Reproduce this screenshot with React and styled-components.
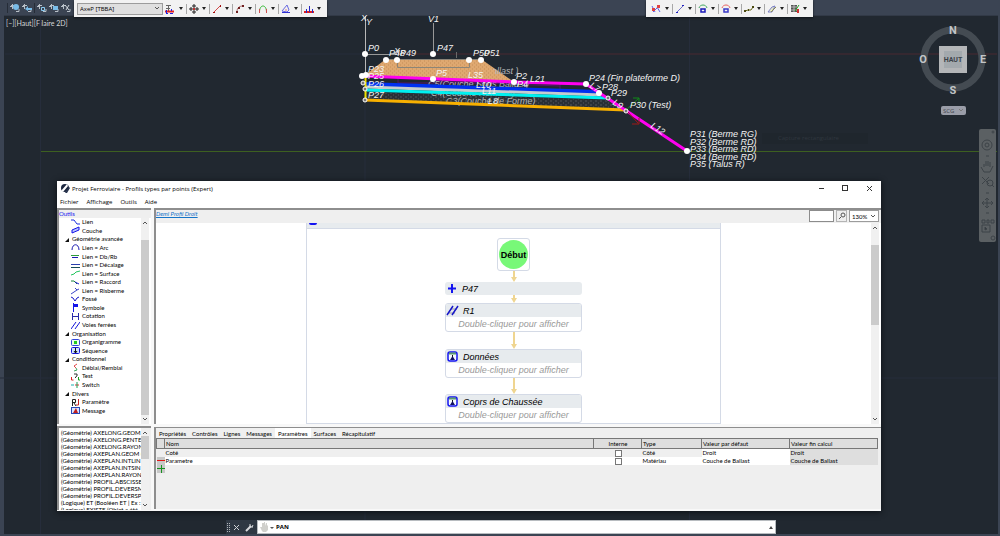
import React from "react";
import styled, { createGlobalStyle } from "styled-components";

const GlobalStyle = createGlobalStyle`
  * { box-sizing: border-box; }
  body {
    margin: 0;
    background: #212830;
    font-family: "Open Sans", "Noto Sans", sans-serif;
    font-size: 6px;
    color: #000;
  }
  button, input, select { font: inherit; color: inherit; margin: 0; padding: 0; border: 0; background: none; }
  svg { display: block; flex: none; }
  ul { list-style: none; margin: 0; padding: 0; }
`;

// ---------- icons of the tree ----------
const treeIcons = {
  lien: <path d="M0 2h3l3 4h3" stroke="#1c2fe0" />,
  couche: <path d="M1 4l7-3v3l-7 3z" stroke="#1414e8" fill="#b9c4ff" />,
  arc: <path d="M1 7c0-7 7-7 7 0" stroke="#1b1bb0" />,
  dbrb: <><path d="M0 3.500h8" stroke="#2d9b3c" /><path d="M1 5.500h6" stroke="#1b1bb0" /></>,
  decalage: <><path d="M0 3.500h9" stroke="#2a3fae" /><path d="M0 6.500h9" stroke="#164a55" /></>,
  surface: <path d="M0 6l3-1 2-2 4-1" stroke="#22c55e" />,
  raccord: <><path d="M0 3h3l3 3" stroke="#16803a" /><path d="M4 4l4 2" stroke="#1b1bd0" /></>,
  risberme: <path d="M0 8l3-2 3-2-2-2M6 4l2-1" stroke="#3a45c8" />,
  fosse: <path d="M0 2l2 1 2 3 2-3 2-1" stroke="#1414c8" />,
  symbole: <><path d="M2.500 0v9" stroke="#1414e8" /><path d="M3 1h4v3H3z" fill="#1414e8" /></>,
  cotation: <path d="M1.500 1v7M7.500 1v7M1 4.500h7" stroke="#2b2ba8" />,
  voies: <path d="M0 8l5-7M4 8l5-7" stroke="#1414d8" />,
  organigramme: <><rect x="0.500" y="1.500" width="8" height="6" rx="1" stroke="#3045d8" fill="#eaffea" /><path d="M3 3h3v3H3z" fill="#22c822" /></>,
  sequence: <><rect x="0.500" y="1.500" width="8" height="6" rx="1" stroke="#1414d8" fill="#cfe0ff" /><path d="M4.500 2v5M3 5l1.500 2 1.500-2" stroke="#111" /></>,
  deblai: <><path d="M6 1L3 3l2 2" stroke="#e04848" /><path d="M5 5l1 2-3 1" stroke="#40a860" /></>,
  test: <><path d="M3 2h3v2L4.500 5v1" stroke="#333" /><path d="M0.500 5v3h2" stroke="#d82020" /><path d="M7.500 5v3H9" stroke="#18a018" /></>,
  swtch: <><path d="M0 5h3" stroke="#18b0b0" /><path d="M4 5h4" stroke="#e03030" /><path d="M6 2v6" stroke="#18a058" /></>,
  parametre: <><path d="M1.500 8V1.500h3v3h-3M3 5l2 3" stroke="#222" /><path d="M7.500 1v6H5" stroke="#c82020" /></>,
  message: <><rect x="0.500" y="1.500" width="8" height="6" stroke="#2848b8" fill="#dce4ff" /><path d="M2 7l3-5 2 5z" fill="#c02020" /></>,
};

const TREE = [
  ["lien", "Lien"],
  ["couche", "Couche"],
  [null, "Géométrie avancée"],
  ["arc", "Lien = Arc"],
  ["dbrb", "Lien = Db/Rb"],
  ["decalage", "Lien = Décalage"],
  ["surface", "Lien = Surface"],
  ["raccord", "Lien = Raccord"],
  ["risberme", "Lien = Risberme"],
  ["fosse", "Fossé"],
  ["symbole", "Symbole"],
  ["cotation", "Cotation"],
  ["voies", "Voies ferrées"],
  [null, "Organisation"],
  ["organigramme", "Organigramme"],
  ["sequence", "Séquence"],
  [null, "Conditionnel"],
  ["deblai", "Déblai/Remblai"],
  ["test", "Test"],
  ["swtch", "Switch"],
  [null, "Divers"],
  ["parametre", "Paramètre"],
  ["message", "Message"],
];

const FUNCTIONS = [
  "(Géométrie) AXELONG.GEOM (E",
  "(Géométrie) AXELONG.PENTE (",
  "(Géométrie) AXELONG.RAYON",
  "(Géométrie) AXEPLAN.GEOM (E",
  "(Géométrie) AXEPLAN.INTLIN (",
  "(Géométrie) AXEPLAN.INTSIN (",
  "(Géométrie) AXEPLAN.RAYON (",
  "(Géométrie) PROFIL.ABSCISSE",
  "(Géométrie) PROFIL.DEVERSMI",
  "(Géométrie) PROFIL.DEVERSPE",
  "(Logique) ET (Booléen ET | Ex :",
  "(Logique) EXISTE (Objet a été",
];

const TABS = ["Propriétés", "Contrôles", "Lignes", "Messages", "Paramètres", "Surfaces", "Récapitulatif"];

// ---------- toolbar icons, 10x10 ----------
const mainTools = [
  ["Axe", <><path d="M1 1.500h5M3.500 1v6M1 4.500h4" stroke="#666" /><path d="M0 7.500h9" stroke="#e02020" strokeWidth="2" /><path d="M1 9.500h2M5 9.500h3M6.500 5v2M1.500 6v3" stroke="#2020e0" /></>],
  ["Déplacer", <><path d="M5 0v10M0 5h10" stroke="#222" /><path d="M3 2h4M3 8h4M2 3v4M8 3v4" stroke="#222" /><path d="M4 4h2v2H4z" fill="#c03030" /></>],
  ["Ligne", <><path d="M2 8l6-6" stroke="#d04848" /><path d="M1 8h2v1H1zM8 1h1v2H8z" fill="#a01010" /></>],
  ["Arc", <><path d="M2 8c0-4 2-6 6-6" stroke="#a06060" /><path d="M1 7h2v2H1zM3 3h2v2H3zM7 1h2v2H7z" fill="#702020" /></>],
  ["Raccord", <><path d="M1.500 8c0-8 7-8 7 0" stroke="#30b830" /><path d="M1.500 5v4M8.500 5v4" stroke="#d05050" /></>],
  ["Angle", <><path d="M1 7l5-6 2 5-2 2z" stroke="#6868e0" /><path d="M1 8.500h8" stroke="#3030d0" /><path d="M4 6h2" stroke="#e08080" /></>],
  ["Profil", <><path d="M0 8h10" stroke="#e02020" strokeWidth="2" /><path d="M2.500 5v4M5.500 2v6M8.500 5v4" stroke="#2828c0" /></>],
];

const sideTools = [
  ["Croisement", <><path d="M1 2l3 6M2 8l6-6M6 3l3 5" stroke="#6060e8" /><path d="M1 4h3v3H1zM6 1h3v3H6z" fill="#e04040" /></>],
  ["Segment", <><path d="M2 8l6-6" stroke="#7070c8" /><path d="M1 8h2v1H1zM7 1h2v1H7z" fill="#2020c0" /></>],
  ["Boucle verte", <><path d="M1 4c1-4 7-4 8 0" stroke="#40a860" /><rect x="3" y="5" width="4" height="3" stroke="#1818b8" strokeWidth="1.500" /></>],
  ["Boucle rouge", <><path d="M1 4c1-4 7-4 8 0" stroke="#e86060" /><rect x="3" y="5" width="4" height="3" stroke="#3838c8" strokeWidth="1.500" /></>],
  ["Courbe", <><path d="M1 7l3-1 3 0 2-3" stroke="#6a6a20" /><path d="M0 6h2v2H0zM4 5h1v2H4zM8 2h2v2H8z" fill="#4a4a10" /></>],
  ["Bande", <><path d="M1 8l4-5 3-1-3 6z" stroke="#7a80c8" fill="#e8ecc8" /><path d="M4 8l5-5" stroke="#8a8a50" /></>],
  ["Grille", <><path d="M1 1h6v7H1z" fill="#555" /><path d="M1 3h6M1 6h6M4 1v7" stroke="#b8b8b8" /><path d="M5 7l4-6" stroke="#20a020" /><path d="M7 5h2v4H7z" fill="#d03030" /></>],
];

const Caret = () => (
  <svg width="4" height="3" viewBox="0 0 4 3"><path d="M0 0h4L2 3z" fill="#222" /></svg>
);

const Chevron = ({ up, color = "#555" }) => (
  <svg width="6" height="5" viewBox="0 0 6 5" fill="none" stroke={color}>
    <path d={up ? "M1 4l2-2 2 2" : "M1 1l2 2 2-2"} />
  </svg>
);

function Tools({ items }) {
  return items.map(([name, art]) => (
    <Tool key={name} aria-label={name}>
      <svg width="10" height="10" viewBox="0 0 10 10" fill="none">{art}</svg>
      <Caret />
    </Tool>
  ));
}

function ScrollBar({ before, size }) {
  return (
    <Scroll>
      <Chevron up />
      <Track>
        <Thumb $before={before} $size={size} />
      </Track>
      <Chevron />
    </Scroll>
  );
}

// cross-section drawn in model space
function CrossSection() {
  const points = [
    [365, 54], [433, 54], [386, 60], [397, 60], [469, 60], [481, 60], [362, 76], [366, 75],
    [433, 79], [514, 82], [586, 84], [599, 93], [687, 151],
  ];
  const rings = [[363, 83], [365, 89], [365, 100], [608, 98], [626, 111]];
  return (
    <Drawing viewBox="0 0 1000 536" width="1000" height="536" fill="none">
      <defs>
        <pattern id="ballast" width="4" height="4" patternUnits="userSpaceOnUse">
          <rect width="4" height="4" fill="#dfa870" />
          <path d="M0 1h1M2 3h1" stroke="#c68f58" />
        </pattern>
        <pattern id="forme" width="5" height="4" patternUnits="userSpaceOnUse">
          <rect width="5" height="4" fill="#2a3036" />
          <path d="M0 1h2M3 3h1" stroke="#50565c" />
        </pattern>
      </defs>
      <path d="M5 54h360M40.500 16v518M365 100v434M689.500 16v518M0 378h997" stroke="#262d3b" />
      <path d="M41 151.500h956" stroke="#3d6020" />
      <path d="M400 54h597" stroke="#4a2930" />
      <path d="M365.500 16v62" stroke="#b8b8b8" />
      <path d="M433.500 23v31M365 54.500h32" stroke="#989898" />

      <path d="M386 59h95l33 23-149-7z" fill="url(#ballast)" />
      <path d="M386 59.500h95" stroke="#8b8478" />
      <path d="M456.500 52v6" stroke="#6a6a6a" />
      <path d="M365 92l241 8 20 10-261-10z" fill="url(#forme)" />
      <path d="M398 78v5h162v6M433 81l127 5" stroke="#57146a" />

      <DimText x="438" y="74">C6(Couche Ballast )</DimText>
      <path d="M386 61h95l14 10v5l-130-1z" fill="url(#ballast)" />
      <path d="M397.500 60v7.500h72V60" stroke="#8d8577" />
      <DimText x="428" y="87">C5(Couche Sous Ballast)</DimText>
      <DimText x="431" y="96">C4(Couche Remblai)</DimText>
      <DimText x="446" y="104">C3(Couche de Forme)</DimText>

      <path d="M365 100l261 10" stroke="#f8b000" strokeWidth="3" />
      <path d="M365 84l234 8" stroke="#0030f0" strokeWidth="4" />
      <path d="M365 87l236 8" stroke="#c4ccd0" strokeWidth="3" />
      <path d="M365 90l243 8" stroke="#00f0f0" strokeWidth="3" />
      <path d="M365.500 76v24" stroke="#ece000" strokeWidth="2" />
      <path d="M362 76l152 6 72 2 101 67" stroke="#ff00f0" strokeWidth="3" />
      <path d="M626 110l13-12M633 98h6v6" stroke="#108a18" />
      <path d="M626 110l12 13M632 124h7v-6" stroke="#a01818" />

      {points.map(([x, y]) => <circle key={`${x}-${y}`} cx={x} cy={y} r="3" fill="#fff" />)}
      {rings.map(([x, y]) => <circle key={`${x}-${y}`} cx={x} cy={y} r="2" fill="#777" stroke="#fff" />)}

      <Label x="361" y="21">X</Label>
      <Label x="366" y="25">Y</Label>
      <Label x="394" y="54">X</Label>
      <Label x="428" y="22">V1</Label>
      <Label x="368" y="51">P0</Label>
      <Label x="437" y="51">P47</Label>
      <Label x="389" y="56">P48</Label>
      <Label x="400" y="56">P49</Label>
      <Label x="473" y="56">P50</Label>
      <Label x="484" y="56">P51</Label>
      <Label x="368" y="72">P23</Label>
      <Label x="368" y="79">P25</Label>
      <Label x="368" y="87">P26</Label>
      <Label x="368" y="98">P27</Label>
      <Label x="436" y="76">P5</Label>
      <Label x="468" y="78">L35</Label>
      <Label x="476" y="88">L10</Label>
      <Label x="482" y="94">L11</Label>
      <Label x="488" y="104">L8</Label>
      <Label x="516" y="79">P2</Label>
      <Label x="517" y="87">P4</Label>
      <Label x="530" y="82">L21</Label>
      <Label x="589" y="81">P24 (Fin plateforme D)</Label>
      <Label x="602" y="90">P28</Label>
      <Label x="611" y="96">P29</Label>
      <Label x="630" y="108">P30 (Test)</Label>
      <Label transform="translate(589 87) rotate(33)">L7</Label>
      <Label transform="translate(612 104) rotate(33)">L9</Label>
      <Label transform="translate(650 127) rotate(34)">L12</Label>
      <Label x="690" y="137">P31 (Berme RG)</Label>
      <Label x="690" y="145">P32 (Berme RD)</Label>
      <Label x="690" y="152">P33 (Berme RD)</Label>
      <Label x="690" y="160">P34 (Berme RD)</Label>
      <Label x="690" y="167">P35 (Talus R)</Label>
    </Drawing>
  );
}

function Compass() {
  return (
    <CompassArt width="70" height="76" viewBox="0 0 70 76">
      <circle cx="35" cy="37" r="29" fill="none" stroke="#444b52" strokeWidth="7" />
      <rect x="21" y="24" width="28" height="27" fill="#b4b6b8" />
      <rect x="26" y="29" width="18" height="17" fill="#a3a9ad" />
      <text x="35" y="40" fontSize="7" fill="#3c4349">HAUT</text>
      <text x="35" y="12" fontSize="11" fill="#c3c5c8">N</text>
      <text x="35" y="72" fontSize="11" fill="#c3c5c8">S</text>
      <text x="5" y="41" fontSize="11" fill="#c3c5c8">O</text>
      <text x="65" y="41" fontSize="11" fill="#c3c5c8">E</text>
    </CompassArt>
  );
}

const Arrow = ({ length }) => (
  <svg width="8" height={length} viewBox={`0 0 8 ${length}`}>
    <path d={`M3 0h2v${length - 5}h2l-3 5-3-5h2z`} fill="#efd590" />
  </svg>
);

const stepIcons = {
  plus: <path d="M7 2v9M3 6.500h8" stroke="#1414f0" strokeWidth="2" />,
  rails: <><path d="M3 9h6M5 5h6" stroke="#9a9aa8" /><path d="M1 11l6-9M6 11l6-9" stroke="#1616c8" strokeWidth="1.500" /></>,
  sequence: <><rect x="2" y="2" width="9" height="9" rx="2" stroke="#1414f0" fill="#f4f8ff" strokeWidth="1.500" /><path d="M3 3.500h7" stroke="#5a9a70" strokeWidth="2" /><path d="M6.500 5v3" stroke="#111" /><path d="M4 10l2.500-4L9 10z" fill="#101060" /></>,
};

function Step({ icon, title, open }) {
  return (
    <StepBox $open={open}>
      <StepHead>
        <svg width="13" height="13" viewBox="0 0 13 13" fill="none">{stepIcons[icon]}</svg>
        {title}
      </StepHead>
      {open && <StepBody>Double-cliquer pour afficher</StepBody>}
    </StepBox>
  );
}

function ProfileDialog() {
  return (
    <Dialog>
      <TitleBar>
        <svg width="9" height="9" viewBox="0 0 9 9">
          <circle cx="4" cy="4" r="4" fill="#1c2740" />
          <path d="M0 7L6 0l1 2-5 6zM5 8l4-5v3L6 9z" fill="#fff" />
          <path d="M4 9l4-6 1 1-3 5z" fill="#26324c" />
        </svg>
        <Title>Projet Ferroviaire - Profils types par points (Expert)</Title>
        <WinButton aria-label="Réduire"><svg width="7" height="7" viewBox="0 0 7 7" stroke="#333"><path d="M1 3.500h5" /></svg></WinButton>
        <WinButton aria-label="Agrandir"><svg width="7" height="7" viewBox="0 0 7 7" stroke="#333" fill="none"><rect x=".5" y=".5" width="5" height="5" /></svg></WinButton>
        <WinButton aria-label="Fermer"><svg width="7" height="7" viewBox="0 0 7 7" stroke="#333"><path d="M1 1l5 5M6 1L1 6" /></svg></WinButton>
      </TitleBar>
      <MenuBar>
        {["Fichier", "Affichage", "Outils", "Aide"].map((m) => <MenuItem key={m}>{m}</MenuItem>)}
      </MenuBar>
      <Columns>
        <SideColumn>
          <ToolsPane>
            <PaneLabel>Outils</PaneLabel>
            <ScrollRow>
              <TreeList>
                {TREE.map(([icon, label]) => icon ? (
                  <TreeItem key={label}>
                    <svg width="9" height="9" viewBox="0 0 9 9" fill="none">{treeIcons[icon]}</svg>
                    {label}
                  </TreeItem>
                ) : (
                  <TreeGroup key={label}>
                    <svg width="4" height="5" viewBox="0 0 4 5"><path d="M4 1v4H0z" fill="#111" /></svg>
                    {label}
                  </TreeGroup>
                ))}
              </TreeList>
              <ScrollBar before={8} size={91} />
            </ScrollRow>
          </ToolsPane>
          <FunctionPane>
            <FunctionList>
              {FUNCTIONS.map((f) => <li key={f}>{f}</li>)}
            </FunctionList>
            <ScrollBar before={2} size={34} />
          </FunctionPane>
        </SideColumn>

        <MainColumn>
          <ChartPane>
            <ChartBar>
              <Crumb href="#profil">Demi Profil Droit</Crumb>
              <SearchInput aria-label="Rechercher" />
              <SearchButton aria-label="Lancer la recherche">
                <svg width="8" height="8" viewBox="0 0 8 8" fill="none" stroke="#555"><circle cx="5" cy="3" r="2" /><path d="M3 5L1 7" /></svg>
              </SearchButton>
              <SelectWrap $width={30}>
                <ZoomSelect aria-label="Zoom" defaultValue="130%"><option>130%</option></ZoomSelect>
                <Chevron />
              </SelectWrap>
            </ChartBar>
            <ScrollRow>
              <ChartView>
                <ChartFrame>
                  <FrameHead><FrameMark /></FrameHead>
                  <StartBox><StartDot>Début</StartDot></StartBox>
                  <Arrow length={11} />
                  <Step icon="plus" title="P47" />
                  <Arrow length={8} />
                  <Step icon="rails" title="R1" open />
                  <Arrow length={17} />
                  <Step icon="sequence" title="Données" open />
                  <Arrow length={16} />
                  <Step icon="sequence" title="Coprs de Chaussée" open />
                </ChartFrame>
              </ChartView>
              <ScrollBar before={8} size={43} />
            </ScrollRow>
          </ChartPane>

          <ParamPane>
            <TabRow role="tablist">
              {TABS.map((t) => (
                <Tab key={t} role="tab" aria-selected={t === "Paramètres"} $active={t === "Paramètres"}>{t}</Tab>
              ))}
            </TabRow>
            <ParamTable>
              <colgroup>
                <Col $width={8} /><col /><Col $width={48} /><Col $width={60} /><Col $width={88} /><Col $width={88} />
              </colgroup>
              <thead>
                <tr>
                  <th aria-label="Action" />
                  <th>Nom</th>
                  <th className="center">Interne</th>
                  <th>Type</th>
                  <th>Valeur par défaut</th>
                  <th>Valeur fin calcul</th>
                </tr>
              </thead>
              <tbody>
                <Row>
                  <td />
                  <td>Coté</td>
                  <td className="center"><Check type="checkbox" aria-label="Coté interne" /></td>
                  <td>Côté</td>
                  <td className="value">Droit</td>
                  <td className="result">Droit</td>
                </Row>
                <Row $white>
                  <td className="sign"><SignButton aria-label="Supprimer"><svg width="8" height="8" viewBox="0 0 8 8"><path d="M0 3.500h8" stroke="#e01818" /></svg></SignButton></td>
                  <td>Parametre</td>
                  <td className="center"><Check type="checkbox" aria-label="Parametre interne" /></td>
                  <td>Matériau</td>
                  <td className="value">Couche de Ballast</td>
                  <td className="result">Couche de Ballast</td>
                </Row>
                <Row>
                  <td className="sign"><SignButton aria-label="Ajouter"><svg width="8" height="8" viewBox="0 0 8 8"><path d="M0 3.500h8M4.500 0v8" stroke="#189020" /></svg></SignButton></td>
                  <td colSpan="5" />
                </Row>
              </tbody>
            </ParamTable>
          </ParamPane>
        </MainColumn>
      </Columns>
    </Dialog>
  );
}

const App = () => {
  return (
    <Desktop>
      <GlobalStyle />
      <TopBar>
        {[0, 1, 2, 3, 4].map((n) => (
          <TopTool key={n} aria-label={`Objet ${n + 1}`} $line={n === 0 || n === 2}>
            <svg width="10" height="10" viewBox="0 0 10 10" fill="none">
              <path d="M1 2.500h4M2.500 1v5M0 3.500h3M6 8.500h3V6" stroke="#b8c0c8" />
              {n === 0 && <circle cx="6" cy="4" r="3" fill="#79bce8" />}
              {n === 1 && <path d="M3 6l3-3v2h4v2H6v1z" fill="#79bce8" />}
              {n === 2 && <path d="M4.500 4.500h3v3h-3z" stroke="#8ccaf0" />}
              {n === 3 && <path d="M4 3h5v4H4z" fill="#79bce8" />}
              {n === 4 && <path d="M4 2l4 5M8 2L5 7" stroke="#cfd6dc" />}
            </svg>
          </TopTool>
        ))}
      </TopBar>
      <ModelView>
        <ViewLabel>[−][Haut][Filaire 2D]</ViewLabel>
      </ModelView>
      <CrossSection />
      <Ghost>Capture rectangulaire</Ghost>
      <Compass />
      <ScgButton>SCG<Chevron color="#777" /></ScgButton>
      <NavBar>
        <svg width="17" height="113" viewBox="0 0 17 113" fill="none" stroke="#3d4348">
          <circle cx="14" cy="3" r="1" />
          <circle cx="8" cy="16" r="5" /><circle cx="8" cy="16" r="2" />
          <path d="M7 27h3M5 43l-3-5M5 43h6l3-6M5 38v-3M7 37v-5M9 37v-5M11 38v-5" />
          <path d="M3 48l7 7M10 48l-7 7" /><circle cx="11" cy="54" r="3" /><path d="M13 56l2 2M7 64h3" />
          <path d="M8 69v10M3 74h11M6 71l2-2 2 2M6 77l2 2 2-2M5 72l-2 2 2 2M12 72l2 2-2 2M7 84h3" />
          <path d="M3 91h3v3H3zM8 91h2v3H8zM12 91h3v3h-3zM3 96h8v7H3z" /><path d="M6 98l2 2-2 1z" fill="#30363b" />
          <circle cx="14" cy="109" r="2" />
        </svg>
      </NavBar>
      <FloatBar $left={74}>
        <SelectWrap $width={86} $grey>
          <ZoomSelect aria-label="Axe" defaultValue="AxeP [TBBA]"><option>AxeP [TBBA]</option></ZoomSelect>
          <Chevron />
        </SelectWrap>
        <Tools items={mainTools} />
      </FloatBar>
      <FloatBar $left={646}><Tools items={sideTools} /></FloatBar>
      <ProfileDialog />
      <CommandBar>
        <svg width="31" height="13" viewBox="0 0 31 13" fill="none">
          <path d="M1.500 2v9M3.500 2v9" stroke="#b0b4b8" strokeDasharray="1 1" />
          <path d="M8 4l5 5M13 4L8 9" stroke="#d0d3d6" />
          <path d="M20 10l5-5" stroke="#d8dadd" strokeWidth="2" /><path d="M24 3v3h3M26 6l1-2" stroke="#d8dadd" />
        </svg>
        <CommandField>
          <svg width="14" height="11" viewBox="0 0 14 11">
            <path d="M2 9L0 5l2 0V1h2v3V0h1v4l1-3h1l0 3 1-1v5L6 10H3z" fill="#d0d0cc" />
            <path d="M10 5h4l-2 2z" fill="#555" />
          </svg>
          <CommandInput aria-label="Commande" defaultValue="PAN" />
          <svg width="4" height="3" viewBox="0 0 4 3"><path d="M0 3h4L2 0z" fill="#444" /></svg>
        </CommandField>
      </CommandBar>
    </Desktop>
  );
};

export default App;

const Desktop = styled.div`
  position: relative;
  display: flex;
  flex-direction: column;
  height: 100vh;
  overflow: hidden;
  background: #3b4453;
`;

const TopBar = styled.div`
  display: flex;
  align-items: center;
  gap: 2px;
  height: 15px;
  padding-left: 7px;
`;

const TopTool = styled.button`
  && {
    display: flex;
    padding-left: ${(p) => (p.$line ? "2px" : "0")};
    border-left: ${(p) => (p.$line ? "1px solid #262d38" : "0")};
  }
`;

const ModelView = styled.main`
  flex: 1;
  margin: 0 2px 2px 4px;
  background: #212830;
  border-top: 1px solid #323a47;
`;

const ViewLabel = styled.div`
  padding: 3px 2px;
  font-family: Lato, sans-serif;
  font-size: 7px;
  line-height: 8px;
  color: #d4d7da;
`;

const Drawing = styled.svg`
  position: absolute;
  top: 0;
  left: 0;
`;

const Label = styled.text`
  font: italic 9px "Liberation Sans", Arial, sans-serif;
  fill: #f4f4f4;
`;

const DimText = styled(Label)`
  fill: #b4b6b8;
`;

const Ghost = styled.div`
  position: absolute;
  top: 133px;
  left: 762px;
  width: 106px;
  padding-left: 16px;
  line-height: 11px;
  font-size: 6px;
  color: #30373f;
  background: #1f262d;
`;

const CompassArt = styled.svg`
  position: absolute;
  top: 22px;
  right: 12px;
  font-family: Roboto, sans-serif;
  font-weight: bold;
  text-anchor: middle;
`;

const ScgButton = styled.button`
  && {
    position: absolute;
    top: 106px;
    right: 34px;
    display: flex;
    align-items: center;
    justify-content: space-between;
    width: 25px;
    height: 9px;
    padding: 0 2px;
    border-radius: 2px;
    background: #9a9da8;
    color: #44484f;
  }
`;

const NavBar = styled.nav`
  position: absolute;
  top: 129px;
  right: 4px;
  border-radius: 2px;
  background: #5b6063;
`;

const FloatBar = styled.div`
  position: absolute;
  top: 0;
  left: ${(p) => p.$left}px;
  display: flex;
  align-items: center;
  height: 17px;
  padding: 0 3px;
  background: #f2f2f2;
  box-shadow: 0 1px 2px #10151a;
`;

const Tool = styled.button`
  && {
    display: flex;
    align-items: center;
    justify-content: space-between;
    width: 23px;
    height: 10px;
    padding: 0 3px 0 2px;
    & + & { border-left: 1px solid #a8a8a8; }
  }
`;

const SelectWrap = styled.div`
  display: flex;
  align-items: center;
  width: ${(p) => p.$width}px;
  height: 12px;
  padding-right: 2px;
  border: 1px solid #9c9c9c;
  background: ${(p) => (p.$grey ? "#dfdfdf" : "#fff")};
`;

const ZoomSelect = styled.select`
  && {
    flex: 1;
    min-width: 0;
    padding-left: 2px;
    appearance: none;
    outline: none;
  }
`;

const Dialog = styled.section`
  position: absolute;
  top: 181px;
  left: 57px;
  right: 119px;
  bottom: 25px;
  display: flex;
  flex-direction: column;
  background: #fff;
  box-shadow: 0 1px 6px #0b0f13;
`;

const TitleBar = styled.header`
  display: flex;
  align-items: center;
  height: 15px;
  padding: 0 0 0 4px;
`;

const Title = styled.h1`
  flex: 1;
  margin: 0;
  padding-left: 2px;
  font-size: 6px;
  font-weight: normal;
`;

const WinButton = styled.button`
  && {
    display: flex;
    justify-content: center;
    width: 24px;
  }
`;

const MenuBar = styled.nav`
  display: flex;
  gap: 8px;
  height: 12px;
  padding-left: 3px;
`;

const MenuItem = styled.button``;

const Columns = styled.div`
  flex: 1;
  display: flex;
  min-height: 0;
  gap: 3px;
  background: #f8f8f8;
  font-family: Lato, "Open Sans", sans-serif;
`;

const Pane = styled.div`
  display: flex;
  flex-direction: column;
  min-height: 0;
  border-top: 2px solid #8e8e8e;
  border-left: 2px solid #8e8e8e;
  background: #efefef;
`;

const SideColumn = styled.div`
  display: flex;
  flex-direction: column;
  gap: 2px;
  width: 94px;
  padding-bottom: 1px;
`;

const ToolsPane = styled(Pane)`
  flex: 1;
`;

const PaneLabel = styled.h2`
  margin: 0;
  font-size: 6px;
  font-weight: normal;
  line-height: 8px;
  color: #1818f0;
`;

const ScrollRow = styled.div`
  flex: 1;
  display: flex;
  min-height: 0;
  background: #fff;
`;

const TreeList = styled.ul`
  flex: 1;
  display: flex;
  flex-direction: column;
  padding-bottom: 9px;
  overflow: hidden;
  white-space: nowrap;
`;

const TreeItem = styled.li`
  flex: 1;
  display: flex;
  align-items: center;
  gap: 2px;
  min-height: 0;
  line-height: 8px;
  padding-left: 12px;
`;

const TreeGroup = styled(TreeItem)`
  gap: 3px;
  padding-left: 6px;
`;

const FunctionPane = styled(Pane)`
  flex-direction: row;
  height: 84px;
`;

const FunctionList = styled.ul`
  flex: 1;
  padding: 1px 0 0 2px;
  overflow: hidden;
  white-space: nowrap;
  line-height: 7px;
  background: #fff;
`;

const Scroll = styled.div`
  display: flex;
  flex-direction: column;
  align-items: center;
  width: 8px;
  padding: 2px 0;
  margin-right: 2px;
  background: #f0f0f0;
`;

const Track = styled.div`
  flex: 1;
  align-self: stretch;
`;

const Thumb = styled.div`
  position: relative;
  top: ${(p) => p.$before}%;
  height: ${(p) => p.$size}%;
  background: #cbcbcb;
`;

const MainColumn = styled.div`
  flex: 1;
  display: flex;
  flex-direction: column;
  gap: 3px;
  min-width: 0;
  padding-bottom: 2px;
`;

const ChartPane = styled(Pane)`
  flex: 1;
`;

const ChartBar = styled.div`
  display: flex;
  align-items: flex-start;
  gap: 2px;
  height: 13px;
  padding-right: 2px;
`;

const Crumb = styled.a`
  flex: 1;
  line-height: 8px;
  font-style: italic;
  color: #1474c8;
`;

const SearchInput = styled.input`
  && {
    width: 25px;
    height: 12px;
    border: 1px solid #8c8c8c;
    background: #fff;
  }
`;

const SearchButton = styled.button`
  && {
    display: flex;
    align-items: center;
    justify-content: center;
    width: 11px;
    height: 12px;
    border: 1px solid #b4b4b4;
  }
`;

const ChartView = styled.div`
  flex: 1;
  overflow: hidden;
  background: #fff;
`;

const ChartFrame = styled.div`
  display: flex;
  flex-direction: column;
  align-items: center;
  width: 58%;
  margin: 0 auto;
  border: 1px solid #d4dae6;
  border-top: 0;
  font-family: "Liberation Sans", Arial, sans-serif;
`;

const FrameHead = styled.div`
  align-self: stretch;
  height: 6px;
  margin-bottom: 9px;
  padding-left: 2px;
  background: #e7ebee;
  border-bottom: 1px solid #d4dae6;
`;

const FrameMark = styled.div`
  width: 8px;
  height: 2px;
  border-radius: 0 0 2px 2px;
  background: #1414f0;
`;

const StartBox = styled.div`
  display: flex;
  padding: 1px;
  border: 1px solid #d4dae6;
  border-radius: 3px;
`;

const StartDot = styled.div`
  display: flex;
  align-items: center;
  justify-content: center;
  width: 29px;
  height: 29px;
  border-radius: 50%;
  background: #78f878;
  font-size: 9px;
  font-weight: bold;
`;

const StepBox = styled.div`
  width: 137px;
  flex: none;
  overflow: hidden;
  border: ${(p) => (p.$open ? "1px solid #d4dae6" : "0")};
  border-radius: 3px;
`;

const StepHead = styled.div`
  display: flex;
  align-items: center;
  gap: 4px;
  height: 13px;
  background: #e7ebee;
  font-size: 9px;
  font-style: italic;
`;

const StepBody = styled.div`
  line-height: 14px;
  font-size: 9px;
  font-style: italic;
  text-align: center;
  color: #999;
`;

const ParamPane = styled(Pane)`
  height: 82px;
  border-top-width: 1px;
`;

const TabRow = styled.div`
  display: flex;
  height: 10px;
`;

const Tab = styled.button`
  && {
    padding: 0 3px;
    background: ${(p) => (p.$active ? "#fff" : "transparent")};
  }
`;

const ParamTable = styled.table`
  width: calc(100% - 3px);
  table-layout: fixed;
  border-collapse: collapse;
  line-height: 8px;

  th {
    height: 10px;
    padding: 0 0 0 1px;
    border: 1px solid #777;
    background: #dedede;
    font-weight: normal;
    text-align: left;
  }
  td { height: 8px; padding: 0 0 0 1px; }
  .center { text-align: center; }
  .value { background: #fff; }
  .result { background: #dedede; }
  .sign { padding: 0; background: #c8c8c8; }
`;

const Col = styled.col`
  width: ${(p) => p.$width}px;
`;

const Row = styled.tr`
  background: ${(p) => (p.$white ? "#fff" : "#efefef")};
`;

const Check = styled.input`
  && {
    display: block;
    width: 7px;
    height: 7px;
    margin: 0 auto;
    appearance: none;
    border: 1px solid #777;
    background: #fff;
  }
`;

const SignButton = styled.button`
  display: block;
`;

const CommandBar = styled.div`
  position: absolute;
  left: 226px;
  right: 224px;
  bottom: 2px;
  display: flex;
  align-items: center;
  height: 14px;
  background: #2f3843;
`;

const CommandField = styled.div`
  flex: 1;
  display: flex;
  align-items: center;
  height: 14px;
  padding: 0 2px;
  background: #fff;
  border: 1px solid #b8bcc0;
`;

const CommandInput = styled.input`
  && {
    flex: 1;
    padding-left: 2px;
    outline: none;
    font-weight: bold;
  }
`;
